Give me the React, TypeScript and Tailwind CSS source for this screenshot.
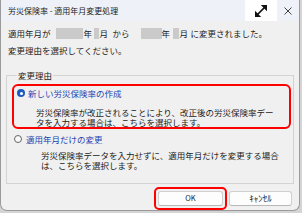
export default function App() {
  return (
    <div className="w-[302px] h-[213px] bg-[#d4d4d4] font-['Noto_Sans_CJK_JP','Noto_Sans',sans-serif] text-[#1b1b1b]">
      <div className="w-[300px] h-[211px] flex flex-col bg-[#f0f0f0] border-x border-b border-[#9a9a9a] rounded-b-[7px] overflow-hidden">
        {/* Title bar */}
        <div className="h-[21px] shrink-0 flex items-stretch bg-[#eef2f8]">
          <div className="flex-1 flex items-center pl-[7px] text-[8px] leading-none whitespace-nowrap">
            労災保険率 - 適用年月変更処理
          </div>
          <div className="w-[32px] bg-white flex items-center justify-center">
            <svg width="14" height="14" viewBox="0 0 14 14">
              <line x1="3.5" y1="10.5" x2="10.5" y2="3.5" stroke="#111" strokeWidth="1.7" />
              <polygon points="13,1 13,7.2 6.8,1" fill="#111" />
              <polygon points="1,13 1,6.8 7.2,13" fill="#111" />
            </svg>
          </div>
          <div className="w-[22px] flex items-center justify-center">
            <svg width="8" height="8" viewBox="0 0 8 8">
              <line x1="0.5" y1="0.5" x2="7.5" y2="7.5" stroke="#444" strokeWidth="1" />
              <line x1="7.5" y1="0.5" x2="0.5" y2="7.5" stroke="#444" strokeWidth="1" />
            </svg>
          </div>
        </div>

        {/* Message */}
        <div className="pl-[7px] pt-[4px] text-[8.5px] leading-[17px] whitespace-nowrap">
          <div className="flex items-center h-[17px]">
            <span>適用年月が</span>
            <span className="ml-[5px] w-[27px] h-[11px] bg-[#cacaca]" />
            <span className="ml-[1px]">年</span>
            <span className="ml-[1.5px] w-[5px] h-[11px] bg-[#cacaca]" />
            <span className="ml-[1px]">月</span>
            <span className="ml-[4.5px]">から</span>
            <span className="ml-[11px] w-[21px] h-[11px] bg-[#cacaca]" />
            <span>年</span>
            <span className="ml-[2.5px] w-[6px] h-[11px] bg-[#cacaca]" />
            <span className="ml-[1px]">月</span>
            <span className="ml-[2.5px]">に変更されました。</span>
          </div>
          <div>変更理由を選択してください。</div>
        </div>

        {/* Group box */}
        <fieldset className="mx-[5px] mt-[11px] border border-[#d3d3d3] pl-[5px] pr-[2px] pt-[3px] pb-[13px] text-[8.5px] whitespace-nowrap">
          <legend className="ml-[5px] px-[1px] leading-[11px]">変更理由</legend>

          <div className="border-[2px] border-[#ff0000] rounded-[6px] pt-[1px]">
            <div className="flex items-center h-[12px] pl-[3px]">
              <span className="w-[8px] h-[8px] rounded-full bg-[#1d5bc0] flex items-center justify-center">
                <span className="w-[3px] h-[3px] rounded-full bg-white" />
              </span>
              <span className="ml-[3px] text-[#2343b0] leading-[12px]">新しい労災保険率の作成</span>
            </div>
            <div className="mt-[7.5px] pl-[22px] leading-[10px]">
              <div>労災保険率が改正されることにより、改正後の労災保険率デー</div>
              <div>タを入力する場合は、こちらを選択します。</div>
            </div>
          </div>

          <div className="mt-[4px] flex items-center h-[12px] pl-[2px]">
            <span className="w-[8px] h-[8px] rounded-full border border-[#666] bg-[#fafafa]" />
            <span className="ml-[4px] text-[#2343b0] leading-[12px]">適用年月だけの変更</span>
          </div>
          <div className="mt-[5px] pl-[29px] leading-[10px]">
            <div>労災保険率データを入力せずに、適用年月だけを変更する場合</div>
            <div>は、こちらを選択します。</div>
          </div>
        </fieldset>

        {/* Buttons */}
        <div className="mt-[3px] flex justify-end items-center pr-[7px] gap-[2px]">
          <div className="border-[2px] border-[#ff0000] rounded-[5px] p-[2px]">
            <button className="w-[65px] h-[15px] bg-[#fdfdfd] border border-[#cfcfcf] border-b-[#b8b8b8] rounded-[3px] flex items-center justify-center text-[7.5px] leading-none">
              OK
            </button>
          </div>
          <button className="w-[63px] h-[15px] bg-[#fdfdfd] border border-[#cfcfcf] border-b-[#b8b8b8] rounded-[3px] flex items-center justify-center text-[9px] leading-none">
            ｷｬﾝｾﾙ
          </button>
        </div>
      </div>
    </div>
  );
}
